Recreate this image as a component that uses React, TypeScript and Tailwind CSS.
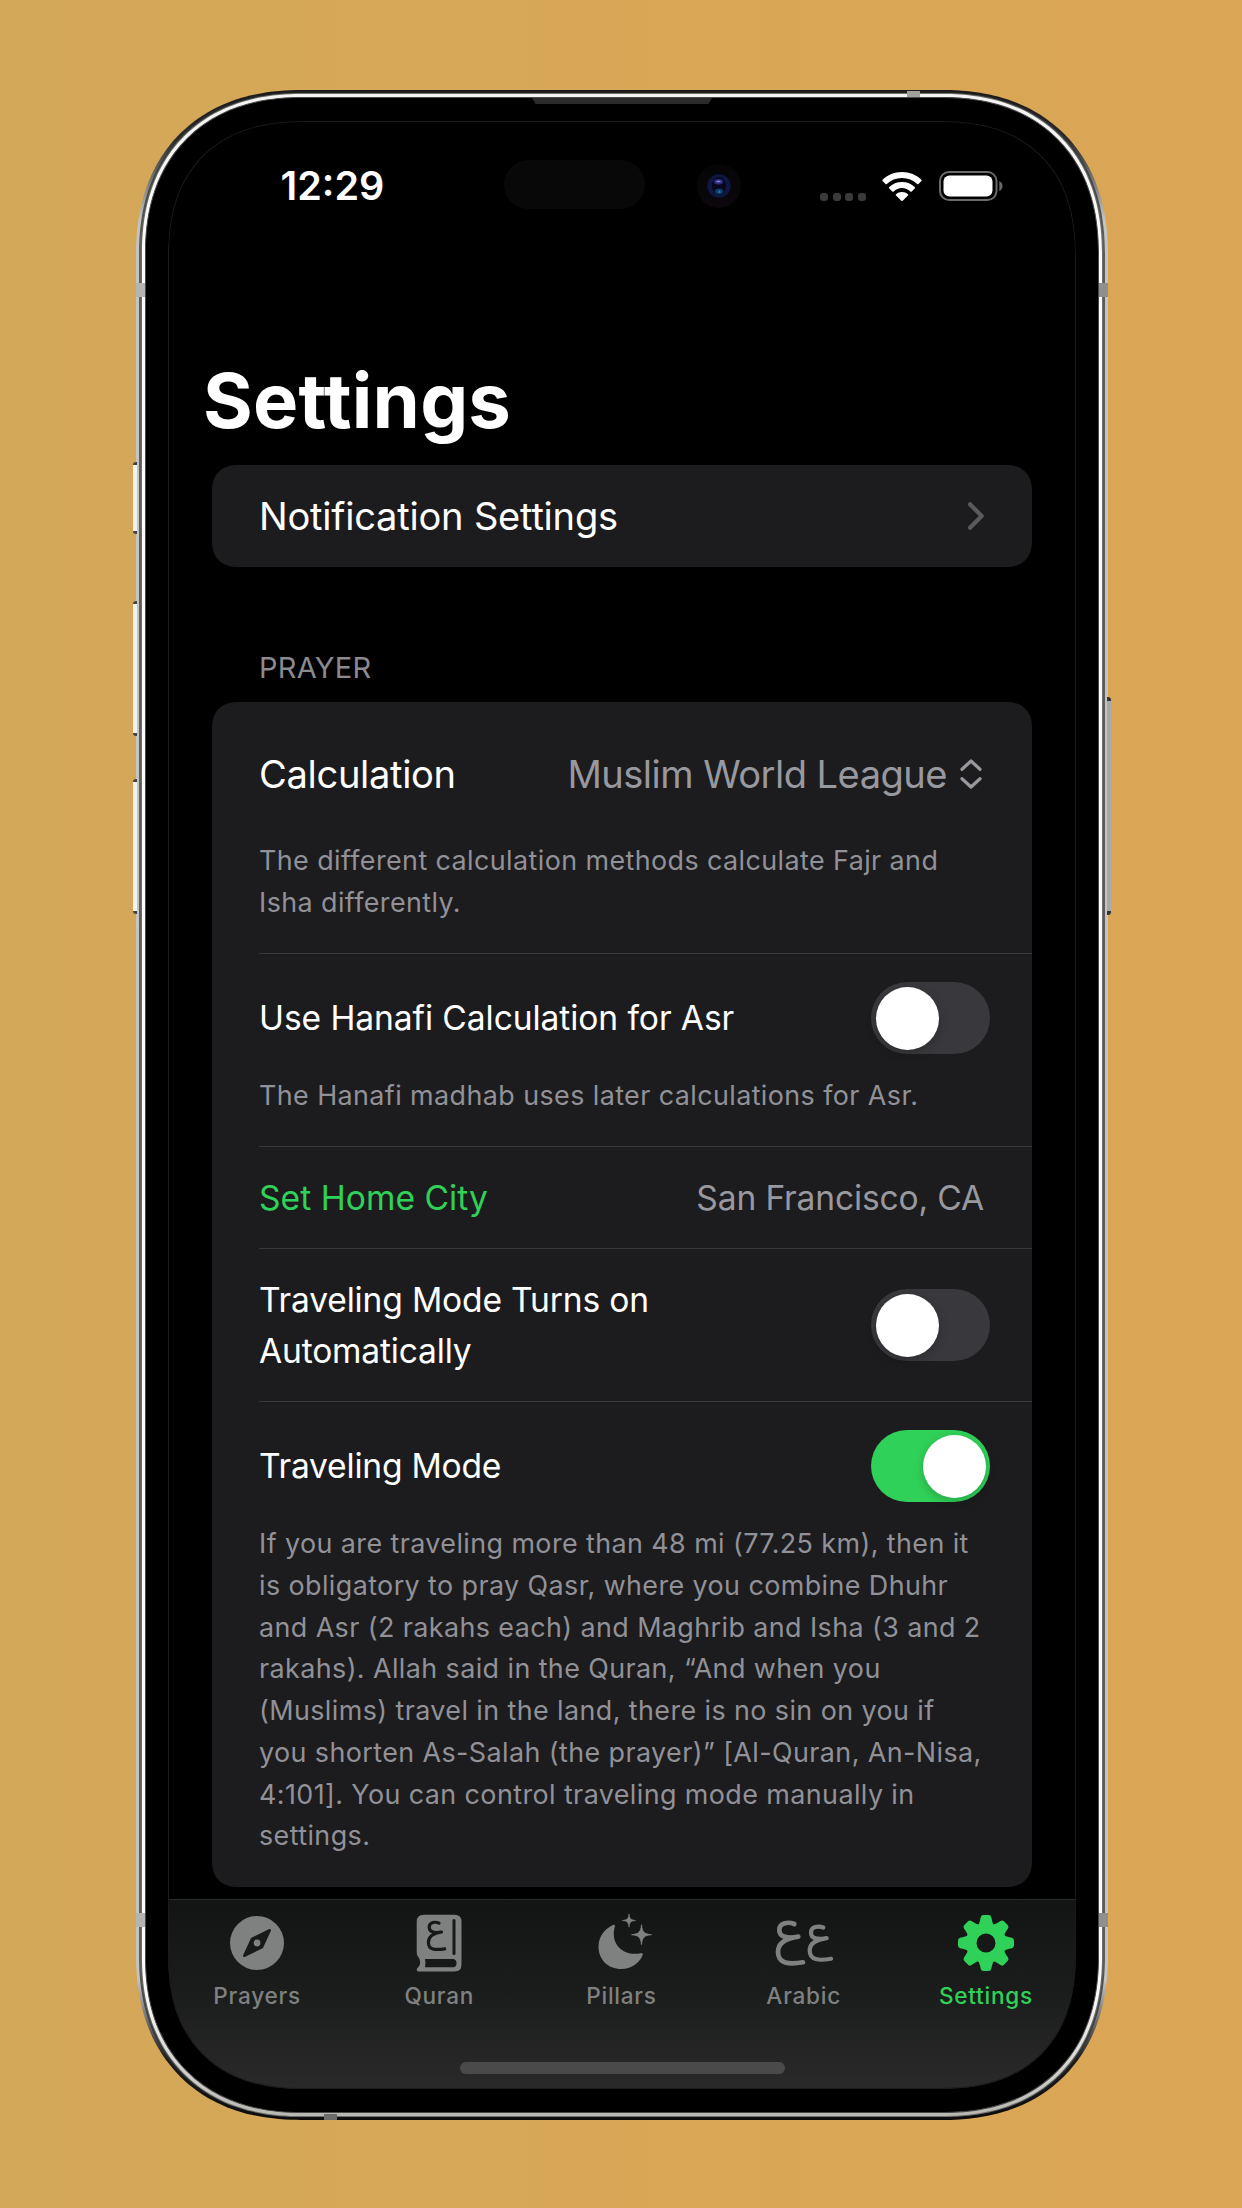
import type { ReactNode } from 'react';

function Toggle({ on = false }: { on?: boolean }) {
  return (
    <div
      className={
        on
          ? 'flex h-[72px] w-[119px] shrink-0 items-center justify-end rounded-full bg-[#30d158] px-[4px]'
          : 'flex h-[72px] w-[119px] shrink-0 items-center rounded-full bg-[#39393d] px-[5px]'
      }
    >
      <div className="size-[63px] rounded-full bg-white shadow-[0_3px_10px_rgba(0,0,0,0.22)]" />
    </div>
  );
}

function Caption({ lines }: { lines: string[] }) {
  return (
    <p className="text-[26.9px] leading-[41.75px] tracking-[0.41px] whitespace-nowrap text-[#919197]">
      {lines.map((line) => (
        <span key={line} className="block">
          {line}
        </span>
      ))}
    </p>
  );
}

function Tab({ label, active = false, children }: { label: string; active?: boolean; children: ReactNode }) {
  return (
    <div className={active ? 'flex flex-1 flex-col items-center text-[#30d158]' : 'flex flex-1 flex-col items-center text-[#7f8180]'}>
      {children}
      <span className="mt-[9px] text-[22.6px] leading-[28px] font-medium tracking-[0.75px]">{label}</span>
    </div>
  );
}

function CompassIcon() {
  return (
    <svg className="size-[60px]" viewBox="0 0 60 60">
      <circle cx="30" cy="30" r="27" fill="currentColor" />
      <path
        d="M42.8 17.2 L35 34.2 L17.2 42.8 L25 25.8 Z"
        fill="#181a19"
        stroke="#181a19"
        strokeWidth="2.4"
        strokeLinejoin="round"
      />
      <circle cx="30" cy="30" r="3.4" fill="currentColor" />
    </svg>
  );
}

function BookIcon() {
  return (
    <svg className="size-[60px]" viewBox="0 0 60 60">
      <path
        d="M14 1.8 H45.5 Q52.5 1.8 52.5 8.8 V51.5 Q52.5 58.5 45.5 58.5 H9.5 Q7.7 58.5 7.7 56.7 Q7.7 55.5 9 54.5 Q11.2 52.8 11.2 49.5 Q11.2 46 9 43.5 Q7.7 42 7.7 39 V8.8 Q7.7 1.8 14.7 1.8 Z"
        fill="currentColor"
      />
      <path d="M16 46 H44 A4.2 4.2 0 0 1 44 54.3 H16 Q17 50 16 46 Z" fill="#171918" />
      <path d="M45 7.5 V40.5" stroke="#171918" strokeWidth="3" strokeLinecap="round" />
      <path
        d="M30 10.2 C26.5 8.4 20.2 9 20.2 14.3 C20.2 19.5 25.5 20.2 32.5 19 C24 20.2 19.4 24 19.4 29.4 C19.4 36.8 26 37.2 35.7 35.9"
        fill="none"
        stroke="#171918"
        strokeWidth="3.2"
        strokeLinecap="round"
        strokeLinejoin="round"
      />
    </svg>
  );
}

function MoonIcon() {
  return (
    <svg className="size-[60px]" viewBox="0 0 60 60">
      <path
        d="M20.5 12.2 C22 11.2 23.4 12 22.8 13.8 C20.8 20.5 21.5 29 27 34.5 C32.5 40.3 41 41.8 48.5 40.2 C50.3 39.8 51.2 40.8 50.5 42.5 C47 50.5 39 56 29.5 56 C15.8 56 6.5 46.5 6.5 33.5 C6.5 24.5 12 16 20.5 12.2 Z"
        fill="currentColor"
      />
      <path d="M37 0.8 C37.6 5.8 38.6 6.9 43.7 7.5 C38.6 8.1 37.6 9.2 37 14.2 C36.4 9.2 35.4 8.1 30.3 7.5 C35.4 6.9 36.4 5.8 37 0.8 Z" fill="currentColor" stroke="currentColor" strokeWidth="0.6" strokeLinejoin="round" />
      <path d="M49.5 11.8 C50.4 19.3 52 20.9 59.5 21.7 C52 22.5 50.4 24.1 49.5 31.6 C48.6 24.1 47 22.5 39.5 21.7 C47 20.9 48.6 19.3 49.5 11.8 Z" fill="currentColor" stroke="currentColor" strokeWidth="0.8" strokeLinejoin="round" />
    </svg>
  );
}

function ArabicIcon() {
  return (
    <svg className="size-[60px]" viewBox="0 0 60 60" fill="none" stroke="currentColor" strokeLinecap="round" strokeLinejoin="round">
      <path
        d="M20.3 11 C15 8.7 5.3 9.2 5.3 17 C5.3 24.6 14 25.5 24.3 23.7 C11 25.6 4 31 4 39 C4 50.7 15 51.6 29 49.3"
        strokeWidth="4.7"
      />
      <path
        d="M49.3 14.5 C44.5 12.7 37 13.3 37 19.7 C37 26 44 26.7 52.7 25.2 C41.5 26.8 35.7 31 35.7 37.5 C35.7 47.2 45 47.9 57 45.7"
        strokeWidth="4.2"
      />
    </svg>
  );
}

function GearIcon() {
  return (
    <svg className="size-[60px]" viewBox="-30 -30 60 60" fill="currentColor">
      {[0, 45, 90, 135, 180, 225, 270, 315].map((angle) => (
        <path
          key={angle}
          d="M-8.5 -17 Q-6.6 -19 -6 -22.5 L-5.3 -25.8 Q-4.8 -28 -2.6 -28 H2.6 Q4.8 -28 5.3 -25.8 L6 -22.5 Q6.6 -19 8.5 -17 Z"
          transform={`rotate(${angle})`}
        />
      ))}
      <path fillRule="evenodd" d="M0 -20 A20 20 0 1 0 0 20 A20 20 0 1 0 0 -20 Z M0 -9.5 A9.5 9.5 0 1 1 0 9.5 A9.5 9.5 0 1 1 0 -9.5 Z" />
    </svg>
  );
}

function StatusBar() {
  return (
    <div className="flex h-[60px] items-center pl-[112.5px]">
      <span className="w-[104px] text-[39.5px] leading-[48px] font-semibold whitespace-nowrap">12:29</span>
      <div className="mb-[4px] ml-[119.5px] h-[49px] w-[141px] shrink-0 rounded-full bg-[#080808]" />
      <div className="ml-[52px] flex size-[44px] shrink-0 items-center justify-center rounded-full bg-linear-to-b from-[#050506] to-[#0c070d]">
        <svg className="size-[24px]" viewBox="0 0 24 24">
          <circle cx="12" cy="12" r="11.7" fill="#0e1740" />
          <ellipse cx="12" cy="12" rx="7" ry="9" fill="#05071c" />
          <ellipse cx="11.5" cy="7.8" rx="4.6" ry="2.8" fill="#2c2a7c" />
          <ellipse cx="11.5" cy="7.5" rx="2.4" ry="1" fill="#7d7ad0" />
          <ellipse cx="12" cy="17.3" rx="4.2" ry="2.9" fill="#103a66" />
          <circle cx="12.3" cy="17.8" r="1.3" fill="#25789a" />
        </svg>
      </div>
      <div className="mt-[22px] ml-[79px] flex w-[46px] shrink-0 justify-between">
        {[0, 1, 2, 3].map((dot) => (
          <div key={dot} className="size-[8px] rounded-[3px] bg-[#3a3a3a]" />
        ))}
      </div>
      <svg className="ml-[16px] h-[29px] w-[40px] shrink-0" viewBox="0 0 40 29" fill="white">
        <path d="M20 0 C27.7 0 34.5 3 39.4 7.7 Q40 8.4 39.4 9 L36.5 12 Q35.9 12.6 35.2 12 C31.2 8.2 25.9 6 20 6 C14.1 6 8.8 8.2 4.8 12 Q4.1 12.6 3.5 12 L0.6 9 Q0 8.4 0.6 7.7 C5.5 3 12.3 0 20 0 Z" />
        <path d="M20 10 C25 10 29.5 11.9 32.7 15 Q33.4 15.7 32.7 16.4 L29.7 19.4 Q29 20 28.3 19.4 C26.1 17.4 23.2 16.1 20 16.1 C16.8 16.1 13.9 17.4 11.7 19.4 Q11 20 10.3 19.4 L7.3 16.4 Q6.6 15.7 7.3 15 C10.5 11.9 15 10 20 10 Z" />
        <path d="M20 20 C22.3 20 24.4 20.9 25.9 22.2 Q26.6 22.9 25.9 23.6 L20.7 28.7 Q20 29.3 19.3 28.7 L14.1 23.6 Q13.4 22.9 14.1 22.2 C15.6 20.9 17.7 20 20 20 Z" />
      </svg>
      <svg className="ml-[17px] h-[30px] w-[64px] shrink-0" viewBox="0 0 64 30">
        <rect x="1" y="1" width="56.5" height="28" rx="9" fill="none" stroke="#6a6a6a" strokeWidth="2" />
        <rect x="4.5" y="4.5" width="49" height="21" rx="6" fill="white" />
        <path d="M60.3 10 Q63.5 11.5 63.5 15 Q63.5 18.5 60.3 20 Z" fill="#6a6a6a" />
      </svg>
    </div>
  );
}

export default function App() {
  return (
    <div className="flex h-[2208px] w-[1242px] overflow-hidden bg-linear-to-r from-[#d3a858] to-[#dba655] pt-[90px] pl-[136px] font-['Inter',sans-serif] text-white">
      <div className="relative h-[2030px] w-[972px]">
        {/* Side buttons */}
        <div className="absolute top-[372px] -left-[3px] h-[72px] w-[4px] rounded-l-[3px] border-y-3 border-[#444] bg-[#f2f2f0]" />
        <div className="absolute top-[511px] -left-[3px] h-[135px] w-[4px] rounded-l-[3px] border-y-3 border-[#444] bg-[#f2f2f0]" />
        <div className="absolute top-[689px] -left-[3px] h-[135px] w-[4px] rounded-l-[3px] border-y-3 border-[#444] bg-[#f2f2f0]" />
        <div className="absolute top-[607px] -right-[3px] h-[218px] w-[4px] rounded-r-[3px] border-y-4 border-[#333] bg-[#a8a8a6]" />

        {/* Metal frame */}
        <div className="h-full rounded-[165px] bg-[linear-gradient(to_bottom,#1a1a1a_0,#2a2a2a_50px,#c4c4c2_130px,#c4c4c2_1890px,#1c1c1c_1970px,#0c0c0c_2030px)] px-[3px] py-[2px] [corner-shape:superellipse(1.165)]">
          <div className="h-full rounded-[162px] bg-[linear-gradient(to_bottom,#222_0,#5c5c5c_150px,#5c5c5c_1870px,#111_2020px)] px-[2px] py-px [corner-shape:superellipse(1.165)]">
            <div className="h-full rounded-[160px] bg-[#6e6e6c] p-[1px] [corner-shape:superellipse(1.165)]">
              <div className="h-full rounded-[159px] bg-[linear-gradient(to_bottom,#f4f4f2_0,#fdfdfc_200px,#fbfbfa_1900px,#b9b9b4_2020px)] p-[3px] [corner-shape:superellipse(1.165)]">
                <div className="h-full rounded-[156px] border border-[#4a4a48] bg-black px-[22px] py-[23px] [corner-shape:superellipse(1.165)]">
                  {/* Screen */}
                  <div className="relative h-full overflow-hidden rounded-[136px] [corner-shape:superellipse(1.24)]">
                    <div className="flex h-full flex-col">
                      <div className="pt-[35px]">
                        <StatusBar />
                      </div>

                      <h1 className="mt-[144px] pl-[35px] text-[76px] leading-[80px] font-bold tracking-[0.2px]">Settings</h1>

                      <div className="mx-[44px] mt-[25px] flex h-[102px] items-center justify-between rounded-[26px] bg-[#1c1c1e] pr-[47px] pl-[47px] [corner-shape:superellipse(1.2)]">
                        <span className="text-[38.1px] leading-[46px] tracking-[-0.22px]">Notification Settings</span>
                        <svg className="h-[30px] w-[18px]" viewBox="0 0 18 30" fill="none">
                          <path d="M3 3.3 L14.7 15 L3 26.7" stroke="#5a5a5c" strokeWidth="4.2" strokeLinecap="round" strokeLinejoin="round" />
                        </svg>
                      </div>

                      <h2 className="mt-[83px] pl-[91px] text-[29px] leading-[36px] tracking-[0.27px] text-[#8a8a90]">PRAYER</h2>

                      <div className="mx-[44px] mt-[16px] h-[1185px] rounded-[26px] bg-[#1c1c1e] pl-[47px] [corner-shape:superellipse(1.2)]">
                        <div className="h-[252px] border-b border-[#38383b] pt-[49px]">
                          <div className="flex h-[46px] items-center justify-between pr-[50px] text-[38.1px] leading-[46px]">
                            <span className="tracking-[-0.32px]">Calculation</span>
                            <div className="flex items-center gap-[13px] text-[#98989f]">
                              <span className="tracking-[-0.53px]">Muslim World League</span>
                              <svg className="h-[30px] w-[22px]" viewBox="0 0 22 30" fill="none" stroke="currentColor" strokeWidth="3.2" strokeLinecap="round" strokeLinejoin="round">
                                <path d="M2 10.3 L11 2 L20 10.3 M2 19.7 L11 28 L20 19.7" />
                              </svg>
                            </div>
                          </div>
                          <div className="mt-[43px]">
                            <Caption lines={['The different calculation methods calculate Fajr and', 'Isha differently.']} />
                          </div>
                        </div>

                        <div className="h-[193px] border-b border-[#38383b] pt-[28px]">
                          <div className="flex items-center justify-between pr-[42px]">
                            <span className="text-[33.6px] leading-[50px] tracking-[-0.08px]">Use Hanafi Calculation for Asr</span>
                            <Toggle />
                          </div>
                          <div className="mt-[21px]">
                            <Caption lines={['The Hanafi madhab uses later calculations for Asr.']} />
                          </div>
                        </div>

                        <div className="flex h-[102px] items-center justify-between border-b border-[#38383b] pr-[48px] text-[33.6px] leading-[50px]">
                          <span className="tracking-[0.05px] text-[#30d158]">Set Home City</span>
                          <span className="tracking-[-0.16px] text-[#98989f]">San Francisco, CA</span>
                        </div>

                        <div className="flex h-[153px] items-center justify-between border-b border-[#38383b] pr-[42px]">
                          <span className="text-[33.6px] leading-[51px] tracking-[-0.18px]">
                            Traveling Mode Turns on
                            <br />
                            Automatically
                          </span>
                          <Toggle />
                        </div>

                        <div className="pt-[28px]">
                          <div className="flex items-center justify-between pr-[42px]">
                            <span className="text-[33.6px] leading-[50px] tracking-[-0.22px]">Traveling Mode</span>
                            <Toggle on />
                          </div>
                          <div className="mt-[21px]">
                            <Caption
                              lines={[
                                'If you are traveling more than 48 mi (77.25 km), then it',
                                'is obligatory to pray Qasr, where you combine Dhuhr',
                                'and Asr (2 rakahs each) and Maghrib and Isha (3 and 2',
                                'rakahs). Allah said in the Quran, “And when you',
                                '(Muslims) travel in the land, there is no sin on you if',
                                'you shorten As-Salah (the prayer)” [Al-Quran, An-Nisa,',
                                '4:101]. You can control traveling mode manually in',
                                'settings.',
                              ]}
                            />
                          </div>
                        </div>
                      </div>

                      {/* Tab bar */}
                      <div className="mt-[12px] flex flex-1 flex-col items-center border-t border-[#2b2c2c] bg-linear-to-b from-[#131514] via-[#1b1d1c] to-[#2a2a2a]">
                        <div className="-ml-[2px] flex w-[911px] shrink-0 self-start pt-[13px]">
                          <Tab label="Prayers">
                            <CompassIcon />
                          </Tab>
                          <Tab label="Quran">
                            <BookIcon />
                          </Tab>
                          <Tab label="Pillars">
                            <MoonIcon />
                          </Tab>
                          <Tab label="Arabic">
                            <ArabicIcon />
                          </Tab>
                          <Tab label="Settings" active>
                            <GearIcon />
                          </Tab>
                        </div>
                        <div className="mt-[52px] h-[12px] w-[325px] rounded-full bg-[#4a4a4a]" />
                      </div>
                    </div>
                    {/* Hairline around the display glass */}
                    <div className="absolute inset-0 rounded-[136px] border border-[#1b1b1b] [corner-shape:superellipse(1.24)]" />
                  </div>
                </div>
              </div>
            </div>
          </div>
        </div>

        {/* Earpiece */}
        <div className="absolute top-[8px] left-[396px] h-[6px] w-[180px] bg-[#2b2b2b] [clip-path:polygon(0_0,100%_0,98%_100%,2%_100%)]" />

        {/* Antenna bands */}
        <div className="absolute top-[193px] left-0 h-[14px] w-[9px] bg-[#b4b4b2]" />
        <div className="absolute top-[193px] right-0 h-[14px] w-[9px] bg-[#8f8f8d]" />
        <div className="absolute top-[1823px] left-0 h-[14px] w-[9px] bg-[#b4b4b2]" />
        <div className="absolute top-[1823px] right-0 h-[14px] w-[9px] bg-[#8f8f8d]" />
        <div className="absolute top-[1px] left-[771px] h-[6px] w-[13px] bg-[#a0a09e]" />
        <div className="absolute bottom-0 left-[188px] h-[6px] w-[13px] bg-[#6c6c6a]" />
      </div>
    </div>
  );
}
